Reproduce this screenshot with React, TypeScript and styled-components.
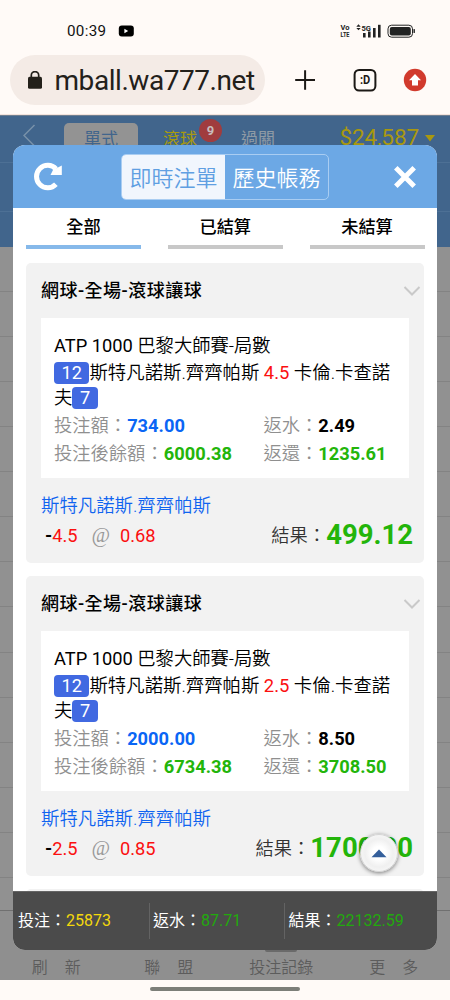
import React from "react";
import styled, { createGlobalStyle } from "styled-components";

const Global = createGlobalStyle`
  * { box-sizing: border-box; }
  body { margin: 0; background: #fffaf7; }
  svg { display: block; flex: none; }
`;

const Phone = styled.div`
  width: 450px;
  height: 1000px;
  position: relative;
  display: flex;
  flex-direction: column;
  overflow: hidden;
  background: #fffaf7;
  font-family: Roboto, "Noto Sans CJK TC", sans-serif;
  white-space: nowrap;
`;

const StatusBar = styled.div`
  height: 54px;
  padding: 7px 34px 0 67px;
  display: flex;
  align-items: center;
  color: #111;
`;
const Clock = styled.span`
  width: 51px;
  font-size: 15.2px;
  line-height: 18px;
  letter-spacing: 0.3px;
`;
const StatusIcons = styled.div`
  margin-left: auto;
  display: flex;
  align-items: center;
`;

const UrlBar = styled.div`
  height: 61px;
  padding: 1px 0 10px 10px;
  display: flex;
  align-items: center;
  border-bottom: 1px solid #f3e3dc;
`;
const UrlPill = styled.div`
  width: 255px;
  height: 50px;
  border-radius: 25px;
  background: #f4ebe6;
  display: flex;
  align-items: center;
  padding-left: 18px;
  gap: 12.5px;
  color: #23201a;
  font-size: 28px;
`;
const UrlText = styled.span`
  line-height: 34px;
  padding-top: 3px;
  letter-spacing: -0.45px;
`;
const UrlActions = styled.div`
  display: flex;
  align-items: center;
  padding-left: 29px;
`;

const Page = styled.div`
  flex: 1;
  display: flex;
  flex-direction: column;
  background: #919191;
`;
const PageHeader = styled.div`
  height: 132px;
  background: #41658c;
  border-top: 1px solid #6f7f91;
`;
const PageNav = styled.div`
  height: 47px;
  display: flex;
  align-items: flex-start;
  border-bottom: 1px solid #4d7095;
  padding: 7px 15px 0 23px;
  font-size: 17px;
  line-height: 33px;
  color: #8f9aa5;
`;
const PageSub = styled.div`
  height: 49px;
  border-bottom: 1px solid #4d7095;
`;
const ActiveMode = styled.div`
  width: 74px;
  height: 36px;
  margin-left: 28px;
  border-radius: 5px;
  background: #939393;
  color: #41658c;
  text-align: center;
`;
const Mode = styled.div<{ $left: number; $gold?: boolean }>`
  margin-left: ${(p) => p.$left}px;
  position: relative;
  color: ${(p) => (p.$gold ? "#a89a0e" : "#8f9aa5")};
`;
const Count = styled.span`
  position: absolute;
  left: 36px;
  top: -4px;
  width: 23px;
  height: 23px;
  border-radius: 50%;
  background: #a03c3e;
  color: #c8bcbc;
  font-size: 13px;
  font-weight: 700;
  line-height: 23px;
  text-align: center;
`;
const Balance = styled.div`
  margin-left: auto;
  display: flex;
  align-items: center;
  gap: 6px;
  color: #a9980f;
  font-size: 22.6px;
  line-height: 30px;
  letter-spacing: -0.15px;
`;
const Rows = styled.div`
  flex: 1;
  display: flex;
  flex-direction: column;
`;
const FirstRow = styled.div`
  height: 45px;
  border-bottom: 1px solid #838383;
`;
const Row = styled.div`
  height: 45.07px;
  border-bottom: 1px solid #838383;
`;
const BottomNav = styled.div`
  height: 70px;
  border-top: 1px solid #707070;
  background: #8f8f8f;
  display: grid;
  grid-template-columns: repeat(4, 1fr);
  align-items: end;
  padding-bottom: 1px;
  font-size: 16px;
  font-weight: 350;
  line-height: 22px;
  color: #5c5c5c;
  text-align: center;
`;
const BottomLabel = styled.span<{ $spread?: boolean }>`
  word-spacing: ${(p) => (p.$spread ? "13px" : "0")};
`;
const Gesture = styled.div`
  height: 20px;
  background: #fffaf7;
  display: flex;
  justify-content: center;
  padding-top: 7px;
`;
const Pill = styled.div`
  width: 150px;
  height: 4px;
  border-radius: 2px;
  background: #7c7e78;
`;
const ActiveMark = styled.i`
  position: absolute;
  left: 265px;
  top: 948px;
  width: 32px;
  height: 4px;
  border-radius: 0 0 2px 2px;
  background: #6a6a6a;
`;

const Modal = styled.section`
  position: absolute;
  left: 13px;
  top: 145px;
  width: 423.5px;
  height: 805px;
  border-radius: 12px;
  overflow: hidden;
  background: #fff;
  display: flex;
  flex-direction: column;
`;
const ModalHeader = styled.header`
  height: 63px;
  flex: none;
  padding: 0 21px 0 20px;
  background: #6ca8e5;
  display: flex;
  align-items: center;
`;
const Segments = styled.div`
  width: 208px;
  height: 46px;
  margin: 1px auto 0 59px;
  border: 1px solid #a9cdf2;
  border-radius: 5px;
  display: flex;
  overflow: hidden;
`;
const Segment = styled.button<{ $on?: boolean }>`
  flex: 1;
  border: 0;
  padding: 2px 0 0;
  font: inherit;
  font-size: 22px;
  font-weight: 350;
  line-height: 44px;
  background: ${(p) => (p.$on ? "#f1f6fd" : "transparent")};
  color: ${(p) => (p.$on ? "#5f9fe2" : "#fff")};
`;
const Tabs = styled.div`
  height: 41px;
  flex: none;
  display: flex;
  justify-content: space-between;
  padding: 0 12px 0 13px;
`;
const Tab = styled.div<{ $on?: boolean }>`
  width: 115px;
  border-bottom: 4px solid ${(p) => (p.$on ? "#86b9ea" : "#c8c8c8")};
  text-align: center;
  font-size: 17.2px;
  font-weight: 500;
  line-height: 39px;
  color: #000;
`;
const List = styled.div`
  flex: 1;
  min-height: 0;
  overflow: hidden;
  padding: 14px 12.5px 0 13px;
  display: flex;
  flex-direction: column;
  gap: 13px;
`;
const Card = styled.article`
  height: 300px;
  flex: none;
  border-radius: 5px;
  background: #f2f2f2;
  padding: 0 15px;
  font-size: 18.3px;
  font-weight: 350;
  color: #000;
`;
const CardHead = styled.div`
  height: 55px;
  display: flex;
  align-items: center;
  justify-content: space-between;
  margin-right: -12px;
  font-size: 18px;
  font-weight: 500;
`;
const CardTitle = styled.span`
  padding-bottom: 3px;
  letter-spacing: 0.5px;
`;
const Detail = styled.div`
  height: 160px;
  background: #fff;
  padding: 14px 6px 0 13px;
`;
const League = styled.div`
  line-height: 28px;
`;
const Circuit = styled.span`
  font-weight: 400;
`;
const Match = styled.div`
  white-space: normal;
  font-size: 18.4px;
  line-height: 25px;
  height: 52px;
`;
const Chip = styled.span`
  display: inline-block;
  height: 22px;
  line-height: 22px;
  padding: 0 7.5px;
  border-radius: 4px;
  background: #4169e1;
  color: #fff;
  font-size: 18.2px;
  font-weight: 400;
`;
const Stats = styled.div`
  display: grid;
  grid-template-columns: 209.5px auto;
  line-height: 27.5px;
  color: #8f8f8f;
`;
const tones = { blue: "#0a66f5", green: "#23b50a", black: "#000" };
const Strong = styled.b<{ $tone: keyof typeof tones }>`
  font-weight: 700;
  color: ${(p) => tones[p.$tone]};
`;
const Pick = styled.div`
  padding-top: 14px;
  line-height: 28px;
  height: 41px;
  font-size: 18.4px;
  color: #1064f0;
`;
const Outcome = styled.div`
  display: flex;
  justify-content: space-between;
  align-items: flex-start;
  margin-right: -4px;
`;
const Odds = styled.div`
  padding-left: 4px;
  line-height: 33px;
`;
const Minus = styled.span`
  font-weight: 700;
`;
const Red = styled.span`
  font-weight: 400;
  color: #fb1010;
`;
const At = styled.span`
  font-family: "Liberation Serif", serif;
  font-style: italic;
  font-size: 20px;
  line-height: 20px;
  color: #999;
  margin: 0 10px 0 14px;
`;
const Result = styled.div`
  color: #333;
  display: flex;
  align-items: flex-start;
  line-height: 34px;
`;
const Amount = styled.b`
  font-size: 27.5px;
  font-weight: 700;
  line-height: 31px;
  color: #23b50a;
`;
const Footer = styled.footer`
  height: 59.5px;
  flex: none;
  background: #4b4b4b;
  border-top: 1px solid #656565;
  display: flex;
  align-items: center;
  padding-left: 5px;
  font-size: 16px;
  color: #fff;
`;
const Total = styled.div<{ $w: number; $line?: boolean }>`
  width: ${(p) => p.$w}px;
  height: 36px;
  line-height: 36px;
  border-right: ${(p) => (p.$line ? "1px solid #636363" : "0")};
  & + & { padding-left: 3.5px; }
`;
const TotalValue = styled.span<{ $gold?: boolean }>`
  color: ${(p) => (p.$gold ? "#f4d80b" : "#22a90d")};
`;
const TopButton = styled.button`
  position: absolute;
  left: 360px;
  top: 834px;
  width: 38px;
  height: 38px;
  border: 1px solid #d4d4d4;
  border-radius: 50%;
  padding: 0;
  background: radial-gradient(circle, #fff 0 25%, #f0f0f0 55%, #f8f8f8 80%, #dedede 100%);
  box-shadow: 0 1px 4px rgba(0, 0, 0, 0.5);
  display: flex;
  align-items: center;
  justify-content: center;
`;

interface Bet {
  line: string;
  stake: string;
  rebate: string;
  after: string;
  back: string;
  odds: string;
  result: string;
}

const bets: Bet[] = [
  { line: "4.5", stake: "734.00", rebate: "2.49", after: "6000.38", back: "1235.61", odds: "0.68", result: "499.12" },
  { line: "2.5", stake: "2000.00", rebate: "8.50", after: "6734.38", back: "3708.50", odds: "0.85", result: "1700.00" },
];

const BetCard = ({ bet }: { bet: Bet }) => (
  <Card>
    <CardHead>
      <CardTitle>網球-全場-滾球讓球</CardTitle>
      <svg width="18" height="12" viewBox="0 0 18 12" fill="none" stroke="#c9c9c9" strokeWidth="2">
        <path d="M1.5 2L9 9.5L16.5 2" />
      </svg>
    </CardHead>
    <Detail>
      <League><Circuit>ATP 1000</Circuit> 巴黎大師賽-局數</League>
      <Match>
        <Chip>12</Chip>斯特凡諾斯.齊齊帕斯 <Red>{bet.line}</Red> 卡倫.卡查諾夫<Chip>7</Chip>
      </Match>
      <Stats>
        <div>投注額：<Strong $tone="blue">{bet.stake}</Strong></div>
        <div>返水：<Strong $tone="black">{bet.rebate}</Strong></div>
        <div>投注後餘額：<Strong $tone="green">{bet.after}</Strong></div>
        <div>返還：<Strong $tone="green">{bet.back}</Strong></div>
      </Stats>
    </Detail>
    <Pick>斯特凡諾斯.齊齊帕斯</Pick>
    <Outcome>
      <Odds>
        <Minus>-</Minus><Red>{bet.line}</Red><At>@</At><Red>{bet.odds}</Red>
      </Odds>
      <Result>結果：<Amount>{bet.result}</Amount></Result>
    </Outcome>
  </Card>
);

export default function App() {
  return (
    <Phone>
      <Global />
      <StatusBar>
        <Clock>00:39</Clock>
        <svg width="16" height="12" viewBox="0 0 16 12">
          <rect x="0.8" y="0.5" width="15" height="11" rx="3" fill="#000" />
          <path d="M6.4 3.8L10.2 6L6.4 8.2Z" fill="#fff" />
        </svg>
        <StatusIcons>
          <svg width="76" height="16" viewBox="0 0 76 16" fill="#222" fontFamily="Roboto" fontWeight="700">
            <text x="0.5" y="7" fontSize="7.5" textLength="9">Vo</text>
            <text x="0.5" y="14.2" fontSize="7.5" textLength="9" lengthAdjust="spacingAndGlyphs">LTE</text>
            <path d="M16.3 3.8L18.5 1.2L20.7 3.8ZM16.3 4.9H20.7L18.5 7.3Z" />
            <text x="21.5" y="7.5" fontSize="8" textLength="9.5" lengthAdjust="spacingAndGlyphs">5G</text>
            <rect x="23" y="10" width="2.6" height="4.5" />
            <rect x="28" y="8.5" width="2.6" height="6" />
            <rect x="33" y="5" width="2.6" height="9.5" />
            <rect x="38" y="1.8" width="2.6" height="12.7" />
            <rect x="48" y="2.2" width="24.5" height="12" rx="3.6" fill="none" stroke="#222" strokeWidth="1" />
            <rect x="49.8" y="4" width="21" height="8.5" rx="2" />
            <rect x="73.5" y="6" width="1.4" height="4" rx="0.6" />
          </svg>
        </StatusIcons>
      </StatusBar>
      <UrlBar>
        <UrlPill>
          <svg width="14" height="18" viewBox="0 0 14 18">
            <path d="M3.3 7V4.3A3.7 3.7 0 0 1 10.7 4.3V7" fill="none" stroke="#23201a" strokeWidth="1.7" />
            <rect x="0" y="5.8" width="14" height="12" rx="1.6" fill="#23201a" />
          </svg>
          <UrlText>mball.wa777.net</UrlText>
        </UrlPill>
        <UrlActions>
          <svg width="109" height="24" viewBox="0 0 109 24">
            <path d="M1.2 12H21M11.1 2.2V21.8" stroke="#1c1916" strokeWidth="2" fill="none" />
            <rect x="60.6" y="1.9" width="20.8" height="20.6" rx="4.5" stroke="#1c1916" strokeWidth="2" fill="none" />
            <text x="66" y="16.3" fontFamily="Roboto" fontWeight="700" fontSize="12" fill="#1c1916" textLength="10.3" lengthAdjust="spacingAndGlyphs">:D</text>
          </svg>
          <svg width="24" height="24" viewBox="0 0 24 24">
            <circle cx="12" cy="12" r="11.2" fill="#d13a2d" />
            <path d="M12 6L18 12.2H15V17.5H9V12.2H6Z" fill="#fff" />
          </svg>
        </UrlActions>
      </UrlBar>
      <Page>
        <PageHeader>
          <PageNav>
            <svg width="13" height="24" viewBox="0 0 13 24" fill="none" stroke="#7891a9" strokeWidth="1.5">
              <path d="M11.5 2L1 12.5L11.5 23" />
            </svg>
            <ActiveMode>單式</ActiveMode>
            <Mode $left={25} $gold>滾球<Count>9</Count></Mode>
            <Mode $left={44}>過關</Mode>
            <Balance>
              $24,587
              <svg width="10" height="7" viewBox="0 0 10 7"><path d="M0 0H10L5 6.5Z" fill="#a9980f" /></svg>
            </Balance>
          </PageNav>
          <PageSub />
        </PageHeader>
        <Rows>
          <FirstRow />
          {Array.from({ length: 13 }, (_, i) => <Row key={i} />)}
        </Rows>
        <BottomNav>
          <BottomLabel $spread>刷 新</BottomLabel>
          <BottomLabel $spread>聯 盟</BottomLabel>
          <BottomLabel>投注記錄</BottomLabel>
          <BottomLabel $spread>更 多</BottomLabel>
        </BottomNav>
      </Page>
      <Gesture><Pill /></Gesture>
      <ActiveMark />

      <Modal>
        <ModalHeader>
          <svg width="29" height="29" viewBox="0 0 29 29">
            <path d="M22.9 22.2A11.2 11.2 0 1 1 23 7" fill="none" stroke="#fff" strokeWidth="5" />
            <path d="M28.8 3.5V13H17.5L20 8Z" fill="#fff" />
          </svg>
          <Segments>
            <Segment $on>即時注單</Segment>
            <Segment>歷史帳務</Segment>
          </Segments>
          <svg width="22" height="22" viewBox="0 0 22 22" stroke="#fff" strokeWidth="5" fill="none">
            <path d="M1.8 1.8L20.2 20.2M20.2 1.8L1.8 20.2" />
          </svg>
        </ModalHeader>
        <Tabs>
          <Tab $on>全部</Tab>
          <Tab>已結算</Tab>
          <Tab>未結算</Tab>
        </Tabs>
        <List>
          {bets.map((bet) => <BetCard key={bet.line} bet={bet} />)}
          <Card />
        </List>
        <Footer>
          <Total $w={131.5} $line>投注：<TotalValue $gold>25873</TotalValue></Total>
          <Total $w={135.5} $line>返水：<TotalValue>87.71</TotalValue></Total>
          <Total $w={140}>結果：<TotalValue>22132.59</TotalValue></Total>
        </Footer>
      </Modal>
      <TopButton>
        <svg width="16" height="9" viewBox="0 0 16 9"><path d="M8 0.5L15.5 8.3H0.5Z" fill="#345f9b" /></svg>
      </TopButton>
    </Phone>
  );
}
